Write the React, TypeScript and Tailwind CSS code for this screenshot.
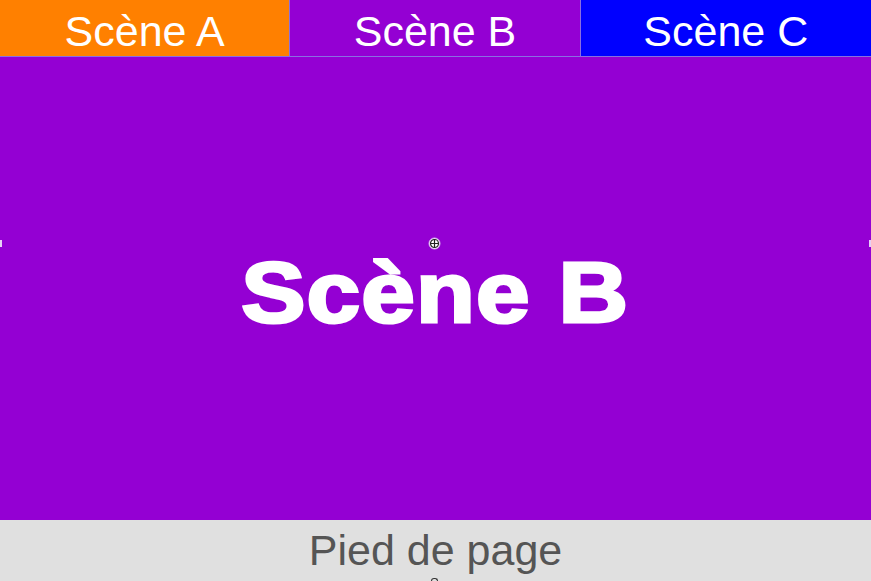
import React from "react";

const tabs = [
  { id: "A", label: "Scène A", bg: "bg-[#ff8000]" },
  { id: "B", label: "Scène B", bg: "bg-[#9400d3]" },
  { id: "C", label: "Scène C", bg: "bg-[#0000ff]" },
];

function Handle({ className }: { className: string }) {
  return (
    <svg width="13" height="13" viewBox="0 0 13 13" className={`absolute ${className}`}>
      <circle cx="6.5" cy="6.5" r="5.5" fill="#ffffff" stroke="#d9b8f0" strokeWidth="1" />
      <circle cx="6.5" cy="6.5" r="4" fill="none" stroke="#222" strokeWidth="1.2" />
      <path d="M6.5 2.5 V10.5 M2.5 6.5 H10.5" stroke="#222" strokeWidth="1.2" />
    </svg>
  );
}

export default function App() {
  return (
    <div className="w-[871px] h-[581px] flex flex-col overflow-hidden font-['Liberation_Sans',Arial,sans-serif]">
      {/* Tabs */}
      <div className="grid grid-cols-3 h-[57px] shrink-0">
        {tabs.map((t) => (
          <div
            key={t.id}
            className={`${t.bg} flex items-center justify-center pt-1.5 text-white text-[43px] leading-none border-r border-b border-[#8a6fe0] last:border-r-0`}
          >
            {t.label}
          </div>
        ))}
      </div>

      {/* Scene */}
      <div className="relative flex-1 bg-[#9400d3] flex items-center justify-center">
        <span className="text-white font-bold text-[86px] leading-none pt-1.5 tracking-[1px] scale-x-[1.12] [-webkit-text-stroke:3px_white]">
          Scène B
        </span>
        <Handle className="left-[428px] top-[180px]" />
        <div className="absolute left-0 top-[183px] w-[2px] h-[7px] bg-[#e6d0f5]" />
        <div className="absolute right-0 top-[183px] w-[2px] h-[7px] bg-[#e6d0f5]" />
      </div>

      {/* Footer */}
      <div className="relative h-[61px] shrink-0 bg-[#e0e0e0] flex items-center justify-center">
        <span className="text-[#555555] text-[43px] leading-none">Pied de page</span>
        <div className="absolute left-[431px] bottom-0 w-[7px] h-[3px] rounded-t-full border border-[#333] border-b-0" />
      </div>
    </div>
  );
}
